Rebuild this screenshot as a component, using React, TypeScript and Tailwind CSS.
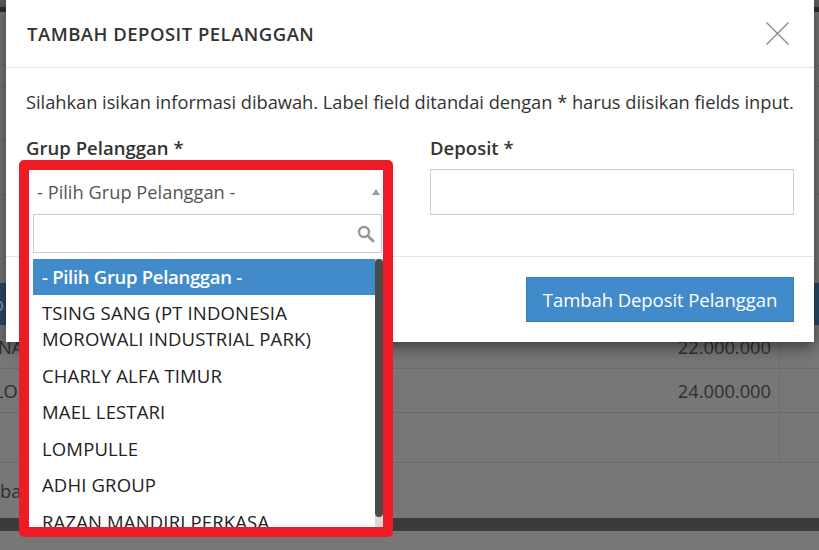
const options = [
  'TSING SANG (PT INDONESIA MOROWALI INDUSTRIAL PARK)',
  'CHARLY ALFA TIMUR',
  'MAEL LESTARI',
  'LOMPULLE',
  'ADHI GROUP',
  'RAZAN MANDIRI PERKASA',
];

function BackgroundPage() {
  return (
    <div className="flex h-[550px] flex-col overflow-hidden bg-[#777777] text-[18.3px] text-[#2f2f2f]">
      <div className="h-[7px] shrink-0 bg-[#5a5a5a]" />
      <div className="h-[5px] shrink-0 bg-[#2e2e2e]" />
      <div className="h-[54px] shrink-0 border-b border-[#6b6b6b]" />
      <div className="h-[21px] shrink-0 border-b border-[#6b6b6b]" />
      <div className="h-[53px] shrink-0 border-b border-[#6b6b6b]" />
      <div className="h-[55px] shrink-0 border-b border-[#6b6b6b]" />
      <div className="h-[88px] shrink-0" />
      <div className="flex h-[42px] shrink-0 items-center bg-[#2a4a66] text-[#8fa3b5]">
        <span className="-ml-[7px]">o</span>
      </div>
      <div className="flex h-[44px] shrink-0 items-center justify-between border-b border-[#6b6b6b]">
        <span className="-ml-[2px]">NA</span>
        <div className="flex h-full items-center">
          <span className="pr-[8px]">22.000.000</span>
          <div className="h-full w-[40px] border-l border-[#6b6b6b]" />
        </div>
      </div>
      <div className="flex h-[44px] shrink-0 items-center justify-between border-b border-[#6b6b6b]">
        <span className="-ml-[6px]">LO</span>
        <div className="flex h-full items-center">
          <span className="pr-[8px]">24.000.000</span>
          <div className="h-full w-[40px] border-l border-[#6b6b6b]" />
        </div>
      </div>
      <div className="flex h-[50px] shrink-0 justify-end border-b border-[#6b6b6b]">
        <div className="h-full w-[40px] border-l border-[#6b6b6b]" />
      </div>
      <div className="flex h-[55px] shrink-0 items-center">
        <span>bai</span>
      </div>
      <div className="h-[13px] shrink-0 bg-[#3b3b3b]" />
    </div>
  );
}

export default function App() {
  return (
    <div className="relative h-[550px] w-[819px] overflow-hidden font-['Open_Sans',sans-serif]">
      <BackgroundPage />

      {/* modal */}
      <div className="absolute top-0 left-[6px] h-[342px] w-[808px] bg-white shadow-[0_5px_15px_rgba(0,0,0,0.5)]">
        <div className="flex h-[68px] items-center justify-between border-b border-[#e5e5e5] pr-[25px] pl-[21px]">
          <h4 className="text-[18.5px] font-semibold tracking-[0.48px] text-[#333333]">TAMBAH DEPOSIT PELANGGAN</h4>
          <svg className="h-[23px] w-[23px]" viewBox="0 0 23 23" fill="none" stroke="#8a8a8a" strokeWidth="1.4">
            <path d="M0.5 0.5L22.5 22.5M22.5 0.5L0.5 22.5" />
          </svg>
        </div>
        <div className="h-[189px] border-b border-[#e5e5e5] px-[20px]">
          <p className="pt-[22px] text-[18.3px] leading-[24px] tracking-[-0.03px] whitespace-nowrap text-[#333333]">
            Silahkan isikan informasi dibawah. Label field ditandai dengan * harus diisikan fields input.
          </p>
          <div className="mt-[22px] flex gap-[37px]">
            <div className="w-[367px]">
              <label className="block text-[18.5px] leading-[24px] font-semibold tracking-[0.03px] text-[#333333]">Grup Pelanggan *</label>
            </div>
            <div className="w-[364px]">
              <label className="block text-[18.5px] leading-[24px] font-semibold tracking-[0.03px] text-[#333333]">Deposit *</label>
              <input className="mt-[9px] block h-[46px] w-full border border-[#cccccc] bg-white" />
            </div>
          </div>
        </div>
        <div className="flex justify-end pt-[20px] pr-[20px]">
          <button className="h-[45px] w-[268px] border border-[#357ebd] bg-[#428bca] text-[18.5px] font-medium tracking-[-0.07px] text-white">
            Tambah Deposit Pelanggan
          </button>
        </div>
      </div>

      {/* open select dropdown with red annotation frame */}
      <div className="absolute top-[160px] left-[19px] h-[377px] w-[374px] overflow-hidden rounded-[5px] border-[10px] border-[#ed1c24] bg-white">
        <div className="flex h-[44px] items-center justify-between pr-[3px] pl-[8px] text-[18.3px] text-[#555555]">
          <span>- Pilih Grup Pelanggan -</span>
          <span className="h-0 w-0 border-x-[4px] border-b-[6px] border-x-transparent border-b-[#999999]" />
        </div>
        <div className="mr-[1px] ml-[4px] flex h-[39px] items-center justify-end border border-[#cccccc] pr-[6px]">
          <svg className="h-[18px] w-[18px]" viewBox="0 0 18 18" fill="none" stroke="#999999">
            <circle cx="7" cy="7" r="5" strokeWidth="2.4" />
            <path d="M10.8 10.8L16 16" strokeWidth="3" strokeLinecap="round" />
          </svg>
        </div>
        <div className="relative mt-[6px] ml-[4px] h-[268px] overflow-hidden">
          <ul className="w-[342px] text-[18.5px] leading-[26.5px] tracking-[0.15px] text-[#222222]">
            <li className="flex h-[36px] items-center bg-[#428bca] pl-[9px] font-semibold tracking-[-0.3px] text-white">- Pilih Grup Pelanggan -</li>
            {options.map((name) => (
              <li key={name} className="px-[9px] pt-[4.5px] pb-[5.5px]">{name}</li>
            ))}
          </ul>
          <div className="absolute top-0 right-0 h-full w-[8px] bg-[#d8d8d8]">
            <div className="h-[258px] w-full rounded-full bg-[#4a4a4a]" />
          </div>
        </div>
      </div>
    </div>
  );
}
